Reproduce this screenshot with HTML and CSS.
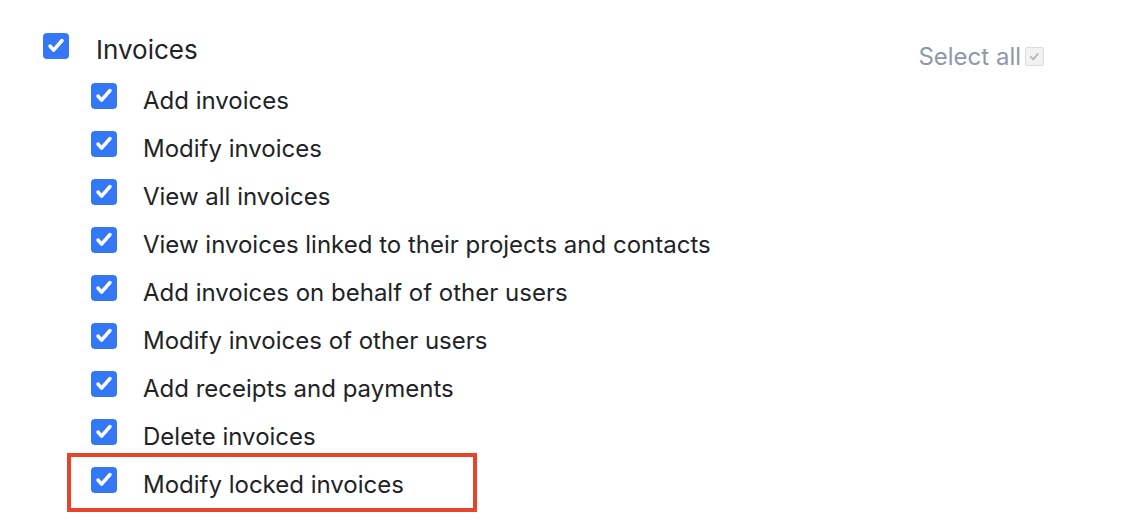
FILE: index.html
```html
<!DOCTYPE html>
<html>
<head>
<meta charset="utf-8">
<link rel="stylesheet" href="styles.css">
</head>
<body>
<div class="panel">
  <div class="group-head">
    <label class="parent">
      <span class="cb"><svg viewBox="0 0 26 26"><path d="M7 13l3.6 4.2L19 7.5" /></svg></span>
      <span class="parent-label">Invoices</span>
    </label>
    <div class="select-all">
      <span>Select all</span>
      <span class="cb-small"><svg viewBox="0 0 19 19"><path d="M5.5 10l2.7 2.7 5-6" /></svg></span>
    </div>
  </div>
  <ul class="perms">
    <li class="perm"><span class="cb"><svg viewBox="0 0 26 26"><path d="M7 13l3.6 4.2L19 7.5" /></svg></span><span class="perm-label">Add invoices</span></li>
    <li class="perm"><span class="cb"><svg viewBox="0 0 26 26"><path d="M7 13l3.6 4.2L19 7.5" /></svg></span><span class="perm-label">Modify invoices</span></li>
    <li class="perm"><span class="cb"><svg viewBox="0 0 26 26"><path d="M7 13l3.6 4.2L19 7.5" /></svg></span><span class="perm-label">View all invoices</span></li>
    <li class="perm"><span class="cb"><svg viewBox="0 0 26 26"><path d="M7 13l3.6 4.2L19 7.5" /></svg></span><span class="perm-label">View invoices linked to their projects and contacts</span></li>
    <li class="perm"><span class="cb"><svg viewBox="0 0 26 26"><path d="M7 13l3.6 4.2L19 7.5" /></svg></span><span class="perm-label">Add invoices on behalf of other users</span></li>
    <li class="perm"><span class="cb"><svg viewBox="0 0 26 26"><path d="M7 13l3.6 4.2L19 7.5" /></svg></span><span class="perm-label">Modify invoices of other users</span></li>
    <li class="perm"><span class="cb"><svg viewBox="0 0 26 26"><path d="M7 13l3.6 4.2L19 7.5" /></svg></span><span class="perm-label">Add receipts and payments</span></li>
    <li class="perm"><span class="cb"><svg viewBox="0 0 26 26"><path d="M7 13l3.6 4.2L19 7.5" /></svg></span><span class="perm-label">Delete invoices</span></li>
    <li class="perm highlighted"><span class="cb"><svg viewBox="0 0 26 26"><path d="M7 13l3.6 4.2L19 7.5" /></svg></span><span class="perm-label">Modify locked invoices</span></li>
  </ul>
</div>
</body>
</html>
```
FILE: styles.css
```css
html, body {
  margin: 0;
  padding: 0;
  background: #ffffff;
}
body {
  font-family: Inter, "Noto Sans", sans-serif;
  color: #222326;
}
.panel {
  padding: 33px 0 22px 43px;
  width: 1001px;
}
.group-head {
  display: flex;
  justify-content: space-between;
  align-items: flex-start;
  height: 26px;
}
.parent {
  display: flex;
  align-items: center;
  gap: 27px;
  height: 26px;
}
.parent-label {
  font-size: 26px;
  line-height: 26px;
  position: relative;
  top: 4px;
}
.cb {
  width: 26px;
  height: 26px;
  border-radius: 4px;
  background: #3478f6;
  display: flex;
  flex: none;
}
.cb svg {
  width: 26px;
  height: 26px;
  fill: none;
  stroke: #ffffff;
  stroke-width: 3.5;
  stroke-linecap: round;
  stroke-linejoin: round;
}
.select-all {
  display: flex;
  align-items: center;
  gap: 4px;
  margin-top: 14px;
  font-size: 24px;
  line-height: 19px;
  color: #8f98a9;
}
.cb-small {
  width: 19px;
  height: 19px;
  box-sizing: border-box;
  border: 1px solid #dcdcdc;
  border-radius: 2px;
  background: #f2f2f2;
  display: flex;
}
.cb-small svg {
  width: 17px;
  height: 17px;
  fill: none;
  stroke: #b5b5b5;
  stroke-width: 2;
  stroke-linecap: round;
  stroke-linejoin: round;
}
.perms {
  list-style: none;
  margin: 13px 0 0 48px;
  padding: 0;
}
.perm {
  display: flex;
  align-items: center;
  gap: 26px;
  height: 48px;
  position: relative;
}
.perm-label {
  font-size: 24px;
  line-height: 26px;
  position: relative;
  top: 5px;
}
.highlighted::after {
  content: "";
  position: absolute;
  left: -24px;
  top: -3px;
  width: 410px;
  height: 59px;
  box-sizing: border-box;
  border: 4px solid #e8442b;
}
```
